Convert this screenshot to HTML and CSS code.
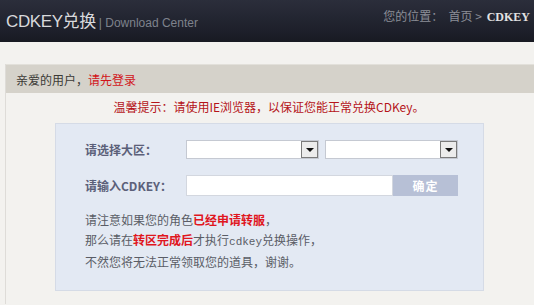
FILE: index.html
```html
<!DOCTYPE html>
<html>
<head>
<meta charset="utf-8">
<link rel="stylesheet" href="styles.css">
</head>
<body>
<div class="header">
  <div class="brand"><span class="title">CDKEY兑换</span><span class="sub">| Download Center</span></div>
  <div class="crumb">您的位置：&nbsp; 首页 &gt; <b class="cur">CDKEY</b></div>
</div>
<div class="main">
  <div class="userbar">亲爱的用户，<span class="red">请先登录</span></div>
  <div class="tip">温馨提示：请使用IE浏览器，以保证您能正常兑换CDKey。</div>
  <div class="box">
    <div class="row">
      <div class="label">请选择大区：</div>
      <div class="select s1"><span class="arrow"></span></div>
      <div class="select s2"><span class="arrow"></span></div>
    </div>
    <div class="row row2">
      <div class="label">请输入CDKEY：</div>
      <div class="input"></div>
      <div class="btn">确定</div>
    </div>
    <div class="note">
      <p>请注意如果您的角色<b class="hl">已经申请转服</b>，</p>
      <p>那么请在<b class="hl">转区完成后</b>才执行<span class="mono">cdkey</span>兑换操作，</p>
      <p>不然您将无法正常领取您的道具，谢谢。</p>
    </div>
  </div>
</div>
</body>
</html>
```
FILE: styles.css
```css
* { box-sizing: border-box; }
body {
  margin: 0;
  background: #f3f2ef;
  font-family: "Noto Sans CJK SC", "Liberation Sans", sans-serif;
  font-size: 12px;
  color: #444;
  height: 305px;
  overflow: hidden;
}
.header {
  height: 42px;
  background: linear-gradient(#2b2e3b, #1d1f2a 75%, #181a22);
  display: flex;
  justify-content: space-between;
  align-items: center;
  padding: 0 4px 3px 6px;
}
.brand { display: flex; align-items: baseline; }
.title {
  font-family: "Liberation Sans", "Noto Sans CJK SC", sans-serif;
  font-size: 17px;
  color: #d8d9dc;
  letter-spacing: -0.4px;
}
.sub {
  font-family: "Liberation Sans", sans-serif;
  font-size: 12px;
  color: #7e828c;
  margin-left: 3px;
}
.crumb {
  color: #8b8e97;
  font-size: 12px;
  padding-bottom: 8px;
}
.cur {
  color: #e2e2e2;
  font-family: "Liberation Serif", serif;
  font-weight: bold;
  margin-left: 2px;
}
.main {
  margin: 22px 0 0 5px;
  border-left: 1px solid #dedcd8;
  height: 240px;
}
.userbar {
  height: 29px;
  line-height: 29px;
  background: #d5d2ca;
  padding-left: 10px;
  color: #3b3a36;
  border-top: 1px solid #e2e0da;
}
.red { color: #d2141a; }
.tip {
  text-align: center;
  color: #b5141a;
  height: 30px;
  line-height: 28px;
  padding-right: 2px;
}
.box {
  margin-left: 49px;
  width: 429px;
  height: 168px;
  background: #e3e9f3;
  border: 1px solid #d5dbe6;
  padding: 15px 0 0 29px;
}
.row {
  display: flex;
  align-items: center;
  height: 20px;
}
.row2 { margin-top: 15px; height: 22px; }
.label {
  width: 101px;
  font-weight: bold;
  color: #5b6079;
  font-size: 12px;
}
.select {
  position: relative;
  height: 19px;
  background: #fff;
  border: 1px solid #c5c9d2;
}
.s1 { width: 133px; }
.s2 { width: 133px; margin-left: 6px; }
.arrow {
  position: absolute;
  right: 0;
  top: 0;
  width: 17px;
  height: 17px;
  background: #ececec;
  border: 1px solid #7b7b7b;
}
.arrow::after {
  content: "";
  position: absolute;
  left: 4px;
  top: 6px;
  border-left: 4px solid transparent;
  border-right: 4px solid transparent;
  border-top: 4px solid #111;
}
.input {
  width: 207px;
  height: 21px;
  background: #fff;
  border: 1px solid #d3d7df;
}
.btn {
  width: 65px;
  height: 21px;
  background: #b7c0d6;
  color: #fff;
  font-weight: bold;
  text-align: center;
  line-height: 21px;
  font-size: 12px;
  letter-spacing: 1px;
}
.note {
  margin-top: 14px;
  color: #5a5d66;
}
.note p {
  margin: 0;
  line-height: 20px;
}
.mono { font-family: "Liberation Mono", monospace; font-size: 11px; }
.hl { color: #e0161e; font-weight: bold; }
```
